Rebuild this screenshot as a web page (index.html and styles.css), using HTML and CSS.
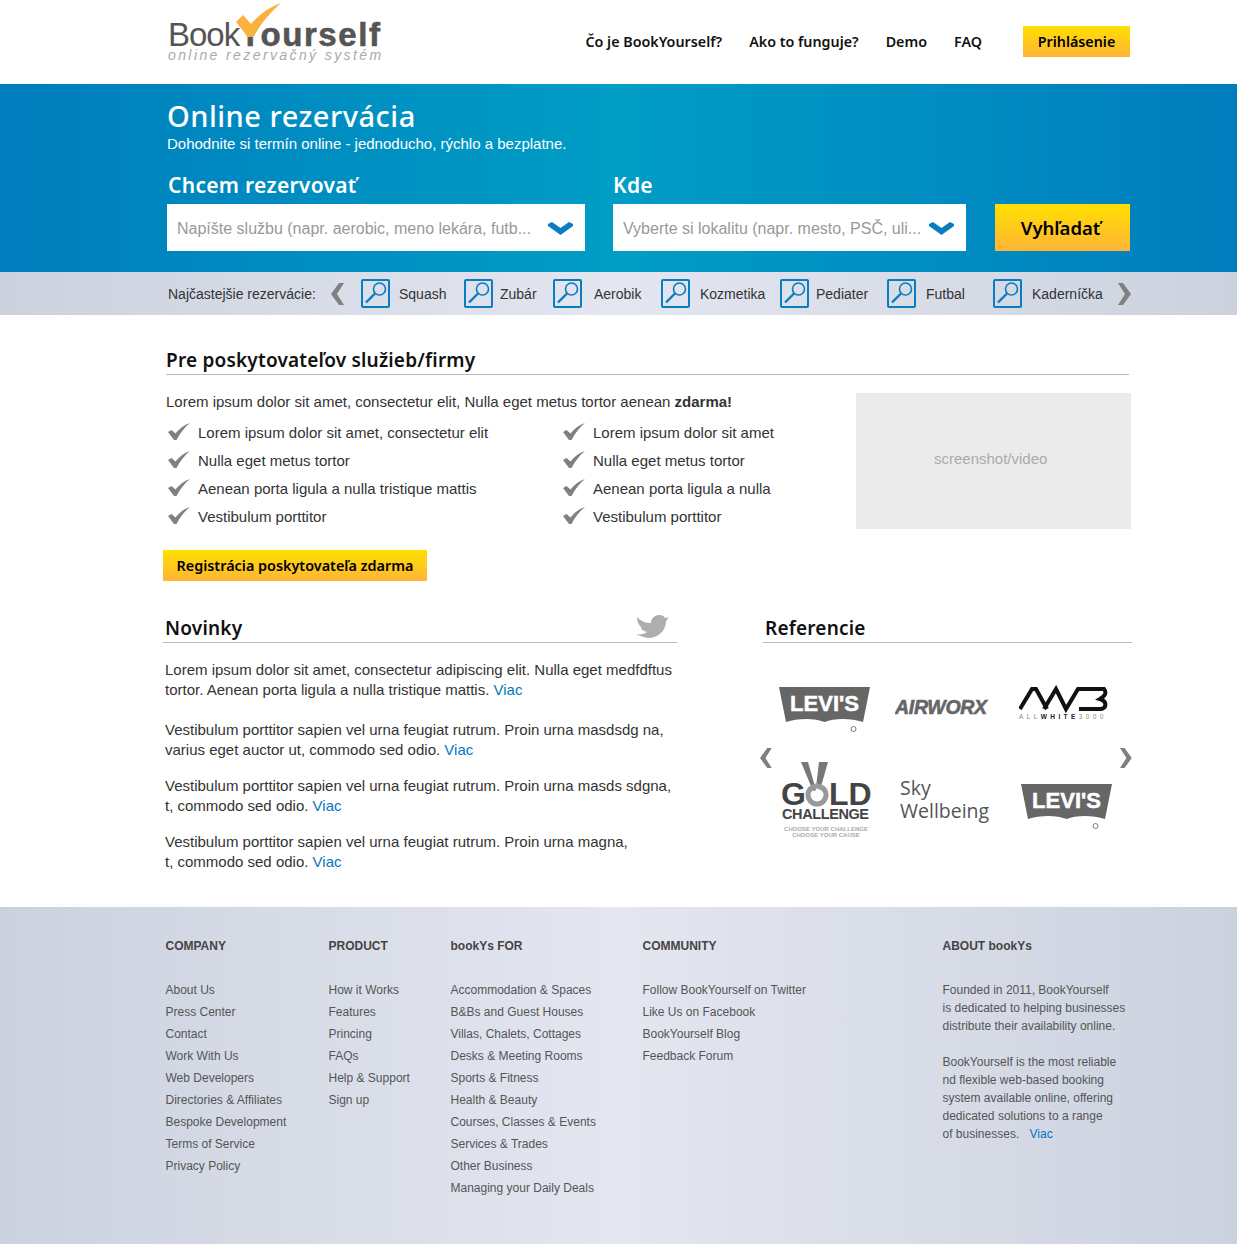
FILE: index.html
```html
<!DOCTYPE html>
<html lang="sk">
<head>
  <meta charset="UTF-8" />
  <meta name="viewport" content="width=device-width, initial-scale=1" />
  <title>BookYourself</title>
  <link rel="stylesheet" href="styles.css">
</head>
<body>
  <header class="wrap top">
    <div class="logo">
      <div class="logo-name"><span class="logo-book">Book</span><span class="logo-you">Yourself</span></div>
      <div class="logo-tag">online rezervačný systém</div>
      <svg class="logo-check" width="46" height="36" viewBox="0 0 46 36"><path d="M0 19 L7 12 L15 21 C23 12 33 4 45 0 C35 9 25 20 17 34 L12 34 Z" fill="#fbb13c"/></svg>
    </div>
    <nav class="nav">
      <a href="#">Čo je BookYourself?</a>
      <a href="#">Ako to funguje?</a>
      <a href="#">Demo</a>
      <a href="#">FAQ</a>
      <a href="#" class="btn btn-login">Prihlásenie</a>
    </nav>
  </header>

  <section class="hero">
    <div class="wrap">
      <h1>Online rezervácia</h1>
      <p class="hero-sub">Dohodnite si termín online - jednoducho, rýchlo a bezplatne.</p>
      <div class="search">
        <div class="field field-what">
          <label>Chcem rezervovať</label>
          <div class="select">
            <span>Napíšte službu (napr. aerobic, meno lekára, futb...</span>
            <svg width="25" height="15" viewBox="0 0 25 15"><path d="M0 3 L4 1 L12.5 7 L21 1 L25 3 L25 5 L12.5 14 L0 5 Z" fill="#0a7cc0"/></svg>
          </div>
        </div>
        <div class="field field-where">
          <label>Kde</label>
          <div class="select">
            <span>Vyberte si lokalitu (napr. mesto, PSČ, uli...</span>
            <svg width="25" height="15" viewBox="0 0 25 15"><path d="M0 3 L4 1 L12.5 7 L21 1 L25 3 L25 5 L12.5 14 L0 5 Z" fill="#0a7cc0"/></svg>
          </div>
        </div>
        <a href="#" class="btn btn-search">Vyhľadať</a>
      </div>
    </div>
  </section>

  <section class="popular">
    <div class="wrap popular-row">
      <span class="popular-label">Najčastejšie rezervácie:</span>
      <svg class="arrow" width="13" height="22" viewBox="0 0 13 22"><path d="M8 0 L13 0 L6 11 L13 22 L8 22 L0 11 Z" fill="#808080"/></svg>
      <div class="popular-items">
        <a href="#" class="pop"><svg class="lens" viewBox="0 0 25 25"><circle cx="16.500" cy="8" r="6"/><path d="M12 12.500 L3 21.500"/></svg><span>Squash</span></a>
        <a href="#" class="pop"><svg class="lens" viewBox="0 0 25 25"><circle cx="16.500" cy="8" r="6"/><path d="M12 12.500 L3 21.500"/></svg><span>Zubár</span></a>
        <a href="#" class="pop"><svg class="lens" viewBox="0 0 25 25"><circle cx="16.500" cy="8" r="6"/><path d="M12 12.500 L3 21.500"/></svg><span>Aerobik</span></a>
        <a href="#" class="pop"><svg class="lens" viewBox="0 0 25 25"><circle cx="16.500" cy="8" r="6"/><path d="M12 12.500 L3 21.500"/></svg><span>Kozmetika</span></a>
        <a href="#" class="pop"><svg class="lens" viewBox="0 0 25 25"><circle cx="16.500" cy="8" r="6"/><path d="M12 12.500 L3 21.500"/></svg><span>Pediater</span></a>
        <a href="#" class="pop"><svg class="lens" viewBox="0 0 25 25"><circle cx="16.500" cy="8" r="6"/><path d="M12 12.500 L3 21.500"/></svg><span>Futbal</span></a>
        <a href="#" class="pop"><svg class="lens" viewBox="0 0 25 25"><circle cx="16.500" cy="8" r="6"/><path d="M12 12.500 L3 21.500"/></svg><span>Kaderníčka</span></a>
      </div>
      <svg class="arrow" width="13" height="22" viewBox="0 0 13 22"><path d="M5 0 L0 0 L7 11 L0 22 L5 22 L13 11 Z" fill="#808080"/></svg>
    </div>
  </section>

  <main class="wrap content">
    <h2 class="title">Pre poskytovateľov služieb/firmy</h2>
    <div class="provider">
      <div class="provider-left">
        <p class="provider-intro">Lorem ipsum dolor sit amet, consectetur elit, Nulla eget metus tortor aenean <b>zdarma!</b></p>
        <ul class="checks">
          <li><svg class="tick" width="22" height="18" viewBox="0 0 22 18"><path d="M0 9 L3.500 7 L7.500 10.500 C11 6 16 2 22 0 C17 4 12 10 8.500 17 L6 17 Z"/></svg>Lorem ipsum dolor sit amet, consectetur elit</li>
          <li><svg class="tick" width="22" height="18" viewBox="0 0 22 18"><path d="M0 9 L3.500 7 L7.500 10.500 C11 6 16 2 22 0 C17 4 12 10 8.500 17 L6 17 Z"/></svg>Lorem ipsum dolor sit amet</li>
          <li><svg class="tick" width="22" height="18" viewBox="0 0 22 18"><path d="M0 9 L3.500 7 L7.500 10.500 C11 6 16 2 22 0 C17 4 12 10 8.500 17 L6 17 Z"/></svg>Nulla eget metus tortor</li>
          <li><svg class="tick" width="22" height="18" viewBox="0 0 22 18"><path d="M0 9 L3.500 7 L7.500 10.500 C11 6 16 2 22 0 C17 4 12 10 8.500 17 L6 17 Z"/></svg>Nulla eget metus tortor</li>
          <li><svg class="tick" width="22" height="18" viewBox="0 0 22 18"><path d="M0 9 L3.500 7 L7.500 10.500 C11 6 16 2 22 0 C17 4 12 10 8.500 17 L6 17 Z"/></svg>Aenean porta ligula a nulla tristique mattis</li>
          <li><svg class="tick" width="22" height="18" viewBox="0 0 22 18"><path d="M0 9 L3.500 7 L7.500 10.500 C11 6 16 2 22 0 C17 4 12 10 8.500 17 L6 17 Z"/></svg>Aenean porta ligula a nulla</li>
          <li><svg class="tick" width="22" height="18" viewBox="0 0 22 18"><path d="M0 9 L3.500 7 L7.500 10.500 C11 6 16 2 22 0 C17 4 12 10 8.500 17 L6 17 Z"/></svg>Vestibulum porttitor</li>
          <li><svg class="tick" width="22" height="18" viewBox="0 0 22 18"><path d="M0 9 L3.500 7 L7.500 10.500 C11 6 16 2 22 0 C17 4 12 10 8.500 17 L6 17 Z"/></svg>Vestibulum porttitor</li>
        </ul>
        <a href="#" class="btn btn-register">Registrácia poskytovateľa zdarma</a>
      </div>
      <div class="video">screenshot/video</div>
    </div>

    <div class="bottom">
      <section class="news">
        <h2 class="title title-news">Novinky
          <svg class="bird" width="34" height="25" viewBox="0 0 34 25"><path d="M1 3 C6 8 10 9 15 9 C15 4 19 1 23 1 C26 1 28 2 29 4 L33 3.5 L30 7 C30 15 24 23 14 24 C9 24 4 22 0 20 C5 21 8 20 11 18 C7 17 5 15 5 13 C3 11 1 8 1 3 Z" fill="#aeaeae"/></svg>
        </h2>
        <p>Lorem ipsum dolor sit amet, consectetur adipiscing elit. Nulla eget medfdftus<br>tortor. Aenean porta ligula a nulla tristique mattis. <a href="#">Viac</a></p>
        <p>Vestibulum porttitor sapien vel urna feugiat rutrum. Proin urna masdsdg na,<br>varius eget auctor ut, commodo sed odio. <a href="#">Viac</a></p>
        <p>Vestibulum porttitor sapien vel urna feugiat rutrum. Proin urna masds sdgna,<br>t, commodo sed odio. <a href="#">Viac</a></p>
        <p>Vestibulum porttitor sapien vel urna feugiat rutrum. Proin urna magna,<br>t, commodo sed odio. <a href="#">Viac</a></p>
      </section>

      <section class="refs">
        <h2 class="title title-refs">Referencie</h2>
        <div class="carousel">
          <svg class="arrow" width="12" height="20" viewBox="0 0 13 22"><path d="M8 0 L13 0 L6 11 L13 22 L8 22 L0 11 Z" fill="#808080"/></svg>
          <div class="ref-grid">
            <svg width="100" height="50" viewBox="0 0 100 50">
              <path d="M0 2 H91 L84 37 C72 33 55 33 45.500 37 C36 33 19 33 7 37 Z" fill="#666"/>
              <text x="45.500" y="26" class="levis">LEVI'S</text>
              <circle cx="74.500" cy="44" r="2.500" fill="none" stroke="#777"/>
            </svg>
            <svg width="100" height="50" viewBox="0 0 100 50">
              <text x="0" y="29" class="airworx">AIRWORX</text>
            </svg>
            <svg width="100" height="50" viewBox="0 0 100 50">
              <path d="M1 24 L13 4 H17 L28 24 M25 24 L37 4 L47 24 L59 4 H85 C88 8 86 11 81 14 C88 16 88 23 82 24 H60" fill="none" stroke="#111" stroke-width="4"/>
              <text x="0" y="34" class="aw3">ALL<tspan class="aw3-bold">WHITE</tspan>3000</text>
            </svg>
            <svg width="100" height="78" viewBox="0 0 100 78">
              <path d="M22 0 L29 0 L37 28 L34 29 Z M40 0 L49 0 L41 28 L37 25 Z" fill="#777"/>
              <text x="2" y="43" class="gold">G</text>
              <circle cx="38" cy="33" r="9" fill="none" stroke="#999" stroke-width="5"/>
              <text x="50" y="43" class="gold">LD</text>
              <text x="3" y="57" class="challenge">CHALLENGE</text>
              <text x="47" y="69" class="cause">CHOOSE YOUR CHALLENGE</text>
              <text x="47" y="75" class="cause">CHOOSE YOUR CAUSE</text>
            </svg>
            <svg width="100" height="78" viewBox="0 0 100 78">
              <text x="5" y="33" class="sky">Sky</text>
              <text x="5" y="56" class="sky">Wellbeing</text>
            </svg>
            <svg width="100" height="78" viewBox="0 0 100 78">
              <path d="M2 22 H93 L86 57 C74 53 57 53 47.500 57 C38 53 21 53 9 57 Z" fill="#666"/>
              <text x="47.500" y="46" class="levis">LEVI'S</text>
              <circle cx="76.500" cy="64" r="2.500" fill="none" stroke="#777"/>
            </svg>
          </div>
          <svg class="arrow" width="12" height="20" viewBox="0 0 13 22"><path d="M5 0 L0 0 L7 11 L0 22 L5 22 L13 11 Z" fill="#808080"/></svg>
        </div>
      </section>
    </div>
  </main>

  <footer class="footer">
    <div class="wrap footer-cols">
      <div class="fcol fcol-company">
        <h4>COMPANY</h4>
        <a href="#">About Us</a>
        <a href="#">Press Center</a>
        <a href="#">Contact</a>
        <a href="#">Work With Us</a>
        <a href="#">Web Developers</a>
        <a href="#">Directories &amp; Affiliates</a>
        <a href="#">Bespoke Development</a>
        <a href="#">Terms of Service</a>
        <a href="#">Privacy Policy</a>
      </div>
      <div class="fcol fcol-product">
        <h4>PRODUCT</h4>
        <a href="#">How it Works</a>
        <a href="#">Features</a>
        <a href="#">Princing</a>
        <a href="#">FAQs</a>
        <a href="#">Help &amp; Support</a>
        <a href="#">Sign up</a>
      </div>
      <div class="fcol fcol-for">
        <h4>bookYs FOR</h4>
        <a href="#">Accommodation &amp; Spaces</a>
        <a href="#">B&amp;Bs and Guest Houses</a>
        <a href="#">Villas, Chalets, Cottages</a>
        <a href="#">Desks &amp; Meeting Rooms</a>
        <a href="#">Sports &amp; Fitness</a>
        <a href="#">Health &amp; Beauty</a>
        <a href="#">Courses, Classes &amp; Events</a>
        <a href="#">Services &amp; Trades</a>
        <a href="#">Other Business</a>
        <a href="#">Managing your Daily Deals</a>
      </div>
      <div class="fcol fcol-community">
        <h4>COMMUNITY</h4>
        <a href="#">Follow BookYourself on Twitter</a>
        <a href="#">Like Us on Facebook</a>
        <a href="#">BookYourself Blog</a>
        <a href="#">Feedback Forum</a>
      </div>
      <div class="fcol fcol-about">
        <h4>ABOUT bookYs</h4>
        <p>Founded in 2011, BookYourself<br>is dedicated to helping businesses<br>distribute their availability online.</p>
        <p>BookYourself is the most reliable<br>nd flexible web-based booking<br>system available online, offering<br>dedicated solutions to a range<br>of businesses. <a href="#" class="more">Viac</a></p>
      </div>
    </div>
  </footer>
</body>
</html>
```

FILE: styles.css
```css
body {
  margin: 0;
  font-family: "Liberation Sans", Arial, sans-serif;
  font-size: 15px;
  color: #333;
  background: #fff;
}
a {
  color: inherit;
  text-decoration: none;
}
h1, h2, h4, p, ul {
  margin: 0;
  padding: 0;
}
.wrap {
  width: 965px;
  margin-left: 166px;
}
.btn {
  display: block;
  font-family: "Noto Sans", sans-serif;
  font-weight: 600;
  color: #000;
  text-align: center;
  background: linear-gradient(#ffe000, #ffb437);
}

/* header */
.top {
  display: flex;
  justify-content: space-between;
  align-items: flex-start;
  height: 84px;
}
.logo {
  position: relative;
  padding: 16px 0 0 2px;
}
.logo-name {
  font-size: 33px;
  line-height: 37px;
  color: #555;
}
.logo-book {
  letter-spacing: -1px;
}
.logo-you {
  font-weight: bold;
  letter-spacing: 1.6px;
  -webkit-text-stroke: 0.6px #555;
}
.logo-tag {
  font-size: 14px;
  font-style: italic;
  line-height: 12px;
  letter-spacing: 2.4px;
  color: #aaa;
  margin-top: -4px;
}
.logo-check {
  position: absolute;
  left: 70px;
  top: 3px;
}
.nav {
  display: flex;
  align-items: center;
  gap: 27px;
  margin: 25px 1px 0 0;
  font-family: "Noto Sans", sans-serif;
  font-weight: 600;
  font-size: 14.3px;
  color: #111;
}
.btn-login {
  width: 107px;
  height: 31px;
  line-height: 31px;
  margin: 1px 0 0 14px;
}

/* hero */
.hero {
  height: 173px;
  padding-top: 15px;
  color: #fff;
  background: linear-gradient(90deg, #007dbd, #009dc5 50%, #007dbd);
}
.hero h1 {
  font-family: "Noto Sans", sans-serif;
  font-weight: 500;
  font-size: 29px;
  line-height: 34px;
  letter-spacing: 0.5px;
  margin-left: 1px;
}
.hero-sub {
  line-height: 20px;
  margin-left: 1px;
  padding-top: 1px;
}
.search {
  display: flex;
  align-items: flex-end;
  margin: 18px 0 0 1px;
}
.field label {
  display: block;
  font-family: "Noto Sans", sans-serif;
  font-weight: 600;
  font-size: 21px;
  line-height: 26px;
  letter-spacing: 0.3px;
  margin: 0 0 6px 1px;
}
.field-what {
  width: 418px;
  margin-right: 28px;
}
.field-where {
  width: 353px;
  margin-right: 29px;
}
.field-where label {
  margin-left: 0;
}
.select {
  display: flex;
  justify-content: space-between;
  align-items: center;
  height: 47px;
  padding: 2px 12px 0 10px;
  box-sizing: border-box;
  background: #fff;
  color: #999;
  font-size: 16px;
}
.btn-search {
  width: 135px;
  height: 47px;
  line-height: 47px;
  font-size: 18.5px;
  text-indent: -4px;
}

/* popular */
.popular {
  height: 43px;
  background: linear-gradient(90deg, #cbd2de, #e4e6f0 50%, #cbd2de);
}
.popular-row {
  display: flex;
  align-items: center;
  height: 43px;
  font-size: 14px;
}
.popular-label {
  width: 163px;
  margin-left: 2px;
}
.popular-items {
  display: grid;
  grid-template-columns: 103px 89px 108px 119px 107px 106px 125px;
  margin-left: 17px;
  width: 757px;
}
.pop {
  display: flex;
  align-items: center;
}
.pop:nth-child(1) span { margin-left: 9px; }
.pop:nth-child(2) span { margin-left: 7px; }
.pop:nth-child(3) span { margin-left: 12px; }
.pop:nth-child(4) span { margin-left: 10px; }
.pop:nth-child(5) span { margin-left: 7px; }
.pop:nth-child(6) span { margin-left: 10px; }
.pop:nth-child(7) span { margin-left: 10px; }
.lens {
  width: 29px;
  height: 29px;
  box-sizing: border-box;
  border: 2px solid #0a7cc0;
  border-radius: 2px;
  fill: none;
  stroke: #0a7cc0;
  stroke-width: 1.6;
}
.lens path {
  stroke-width: 2.4;
}

/* content */
.content {
  padding-top: 32px;
  padding-bottom: 35px;
}
.title {
  font-family: "Noto Sans", sans-serif;
  font-weight: 600;
  font-size: 19px;
  line-height: 26px;
  letter-spacing: 0.2px;
  color: #111;
  border-bottom: 1px solid #bbb;
  padding-bottom: 1px;
  width: 963px;
}
.provider {
  display: flex;
  margin-top: 18px;
}
.provider-left {
  width: 690px;
}
.provider-intro {
  line-height: 18px;
}
.checks {
  display: grid;
  grid-template-columns: 395px 295px;
  list-style: none;
  margin: 7px 0 0 2px;
}
.checks li {
  display: flex;
  align-items: center;
  height: 28px;
}
.tick {
  margin-right: 8px;
  fill: #808080;
}
.btn-register {
  width: 264px;
  height: 31px;
  line-height: 31px;
  margin: 20px 0 0 -3px;
  font-size: 14.4px;
}
.video {
  width: 275px;
  height: 136px;
  background: #ebebeb;
  color: #aaa;
  line-height: 132px;
  text-indent: 78px;
}
.bottom {
  display: flex;
  gap: 86px;
  width: 969px;
  margin: 34px 0 0 -3px;
}
.news {
  width: 514px;
}
.news p {
  margin: 16px 0 0 2px;
  line-height: 20px;
}
.news h2 + p {
  margin: 17px 0 20px 2px;
}
.news h2 + p + p {
  margin-top: 0;
}
.news p a,
.more {
  color: #0077c0;
}
.title-news,
.title-refs {
  width: auto;
  padding-left: 2px;
  position: relative;
}
.bird {
  position: absolute;
  right: 7px;
  top: -1px;
}
.refs {
  width: 369px;
}
.carousel {
  display: flex;
  align-items: center;
  margin: 42px 0 0 -3px;
}
.carousel .arrow {
  margin-top: -10px;
}
.ref-grid {
  display: grid;
  grid-template-columns: 116px 124px 101px;
  grid-template-rows: 50px 78px;
  row-gap: 27px;
  margin-left: 7px;
  width: 348px;
}
.levis {
  font: bold 22px "Liberation Sans", sans-serif;
  fill: #fff;
  stroke: #fff;
  stroke-width: 0.5;
  text-anchor: middle;
}
.airworx {
  font: italic bold 19.500px "Liberation Sans", sans-serif;
  fill: #666;
  stroke: #666;
  stroke-width: 0.6;
  letter-spacing: -0.3px;
}
.aw3 {
  font: 6.500px "Liberation Sans", sans-serif;
  fill: #888;
  letter-spacing: 3.400px;
}
.aw3-bold {
  font-weight: bold;
  fill: #222;
}
.gold {
  font: bold 32px "Liberation Sans", sans-serif;
  fill: #444;
}
.challenge {
  font: bold 14.500px "Liberation Sans", sans-serif;
  fill: #444;
  letter-spacing: -0.4px;
}
.cause {
  font: bold 6px "Liberation Sans", sans-serif;
  fill: #aaa;
  text-anchor: middle;
}
.sky {
  font: 19.500px "Open Sans", sans-serif;
  fill: #555;
}

/* footer */
.footer {
  height: 337px;
  font-size: 12px;
  color: #555;
  background: linear-gradient(90deg, #cbd2de, #e4e6f0 50%, #cbd2de);
}
.footer-cols {
  display: flex;
  padding-top: 31px;
  margin-left: 165.500px;
}
.fcol h4 {
  font-size: 12px;
  line-height: 16px;
  color: #444;
  margin-bottom: 25px;
}
.fcol > a {
  display: block;
  line-height: 22px;
}
.fcol p {
  line-height: 18px;
  margin-bottom: 18px;
}
.fcol-about h4 {
  margin-bottom: 27px;
}
.fcol-company { width: 163px; }
.fcol-product { width: 122px; }
.fcol-for { width: 192px; }
.fcol-community { width: 300px; }
.more {
  margin-left: 7px;
}
```
